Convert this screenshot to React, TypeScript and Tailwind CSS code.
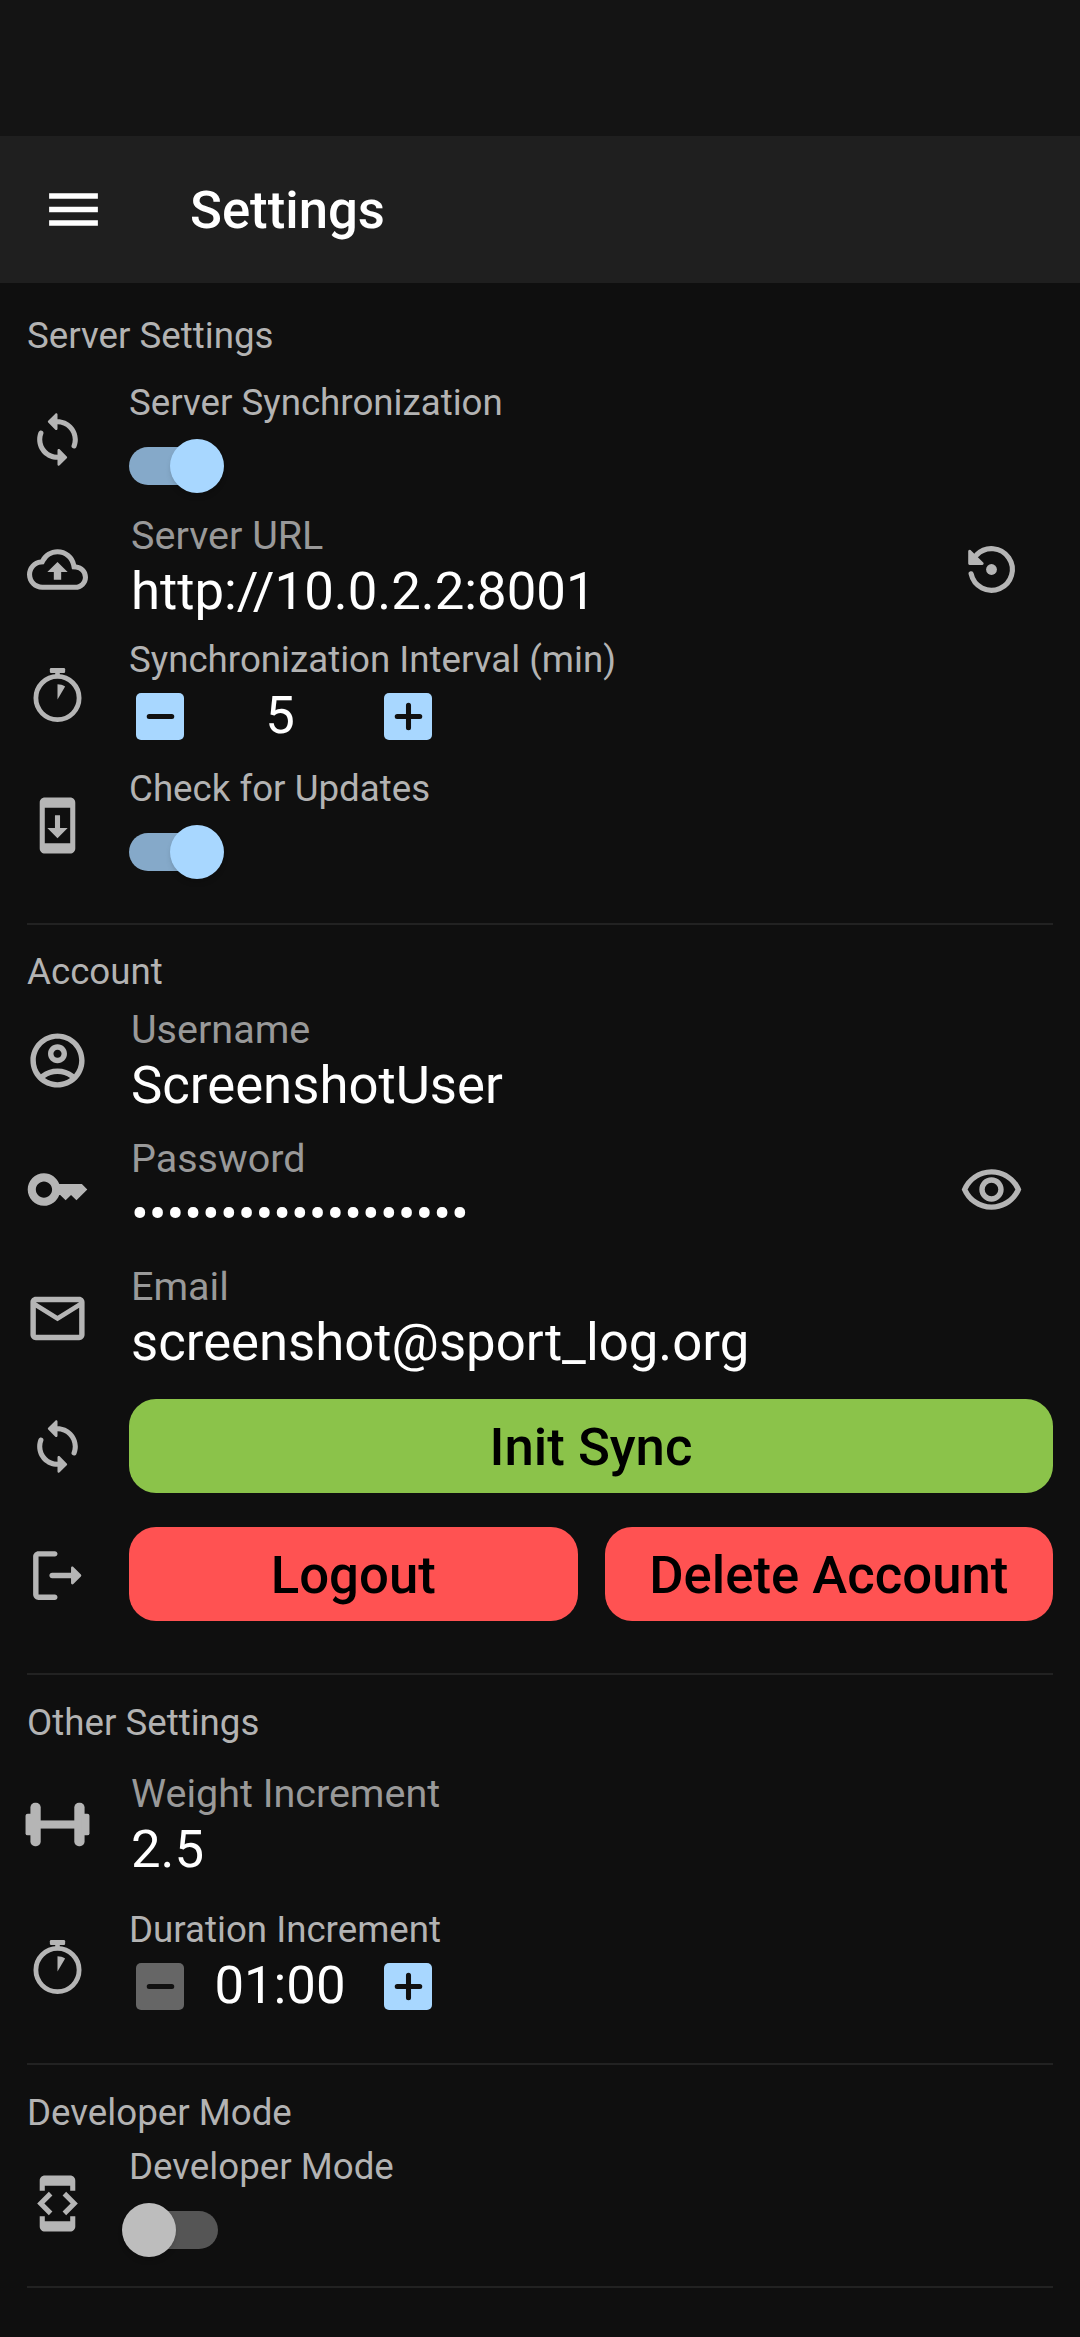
import React from 'react';
import {
  MdDeveloperMode,
  MdMenu,
  MdOutlineAccountCircle,
  MdOutlineCloudUpload,
  MdOutlineEmail,
  MdOutlineRemoveRedEye,
  MdSystemUpdate,
} from 'react-icons/md';

const SyncIcon = () => (
  <svg width="65" height="65" viewBox="0 0 24 24" fill="currentColor">
    <path d="M12 4V2.21c0-.45-.54-.67-.85-.35l-2.8 2.79c-.2.2-.2.51 0 .71l2.79 2.79c.32.31.86.09.86-.36V6c3.31 0 6 2.69 6 6 0 .79-.15 1.56-.44 2.25-.15.36-.04.77.23 1.04.51.51 1.37.33 1.64-.34.37-.91.57-1.91.57-2.95 0-4.42-3.58-8-8-8zm0 14c-3.31 0-6-2.69-6-6 0-.79.15-1.56.44-2.25.15-.36.04-.77-.23-1.04-.51-.51-1.37-.33-1.64.34C4.2 9.96 4 10.96 4 12c0 4.42 3.58 8 8 8v1.79c0 .45.54.67.85.35l2.79-2.79c.2-.2.2-.51 0-.71l-2.79-2.79c-.31-.31-.85-.09-.85.36V18z" />
  </svg>
);

const RestoreIcon = () => (
  <svg width="65" height="65" viewBox="0 0 24 24" fill="currentColor">
    <path d="M4.47 13.6A7.7 7.7 0 1 0 6.5 6.6" fill="none" stroke="currentColor" strokeWidth="1.9" strokeLinecap="round" />
    <path d="M3.9 5.2v4.6h4.7z" stroke="currentColor" strokeWidth="1" strokeLinejoin="round" />
    <circle cx="12" cy="12" r="2" />
  </svg>
);

const TimerIcon = () => (
  <svg width="65" height="65" viewBox="0 0 24 24" fill="currentColor">
    <rect x="9" y="1.6" width="6" height="1.9" rx="0.5" />
    <rect x="11.1" y="3" width="1.8" height="2.5" />
    <circle cx="12" cy="13.4" r="8.5" fill="none" stroke="currentColor" strokeWidth="1.9" />
    <path d="M12 14V8c1 0 2.1.3 3 .9z" />
  </svg>
);

const KeyIcon = () => (
  <svg width="65" height="65" viewBox="0 0 24 24" fill="currentColor">
    <path d="M21 10h-8.35C11.83 7.67 9.61 6 7 6c-3.31 0-6 2.69-6 6s2.69 6 6 6c2.61 0 4.83-1.67 5.65-4H13l2 2 2-2 2 2 4-4.04L21 10zM7 15c-1.65 0-3-1.35-3-3s1.35-3 3-3 3 1.35 3 3-1.35 3-3 3z" />
  </svg>
);

const LogoutIcon = () => (
  <svg width="65" height="65" viewBox="0 0 24 24" fill="currentColor">
    <path d="M5 5h6c.55 0 1-.45 1-1s-.45-1-1-1H5c-1.1 0-2 .9-2 2v14c0 1.1.9 2 2 2h6c.55 0 1-.45 1-1s-.45-1-1-1H5V5z" />
    <path d="M20.65 11.65l-2.79-2.79c-.32-.32-.86-.1-.86.35V11h-7c-.55 0-1 .45-1 1s.45 1 1 1h7v1.79c0 .45.54.67.85.35l2.79-2.79c.2-.19.2-.51.01-.7z" />
  </svg>
);

const DumbbellIcon = () => (
  <svg width="65" height="65" viewBox="0 0 24 24" fill="currentColor">
    <rect x="0.2" y="8" width="3" height="8" rx="0.8" />
    <rect x="2" y="4" width="3.8" height="16" rx="1.7" />
    <rect x="5" y="10.5" width="14" height="3" />
    <rect x="18.2" y="4" width="3.8" height="16" rx="1.7" />
    <rect x="20.8" y="8" width="3" height="8" rx="0.8" />
  </svg>
);

const Section: React.FC<{ title: string; children: React.ReactNode }> = ({ title, children }) => (
  <section className="border-b-2 border-[#222222]">
    <h2 className="h-[36px] text-[36.7px] leading-[36px] text-[#b3b3b3]">{title}</h2>
    {children}
  </section>
);

const Row: React.FC<{ icon: React.ReactNode; className: string; trailing?: React.ReactNode; children: React.ReactNode }> = ({ icon, className, trailing, children }) => (
  <div className={`flex items-center ${className}`}>
    <div className="flex w-[61px] flex-none justify-center text-[#b5b5b5]">{icon}</div>
    <div className="ml-[41px] min-w-0 flex-1">{children}</div>
    {trailing && <div className="mr-[29px] flex-none text-[#b5b5b5]">{trailing}</div>}
  </div>
);

const FieldLabel: React.FC<{ children: React.ReactNode }> = ({ children }) => (
  <div className="h-[35px] text-[36.7px] leading-[35px] text-[#b3b3b3]">{children}</div>
);

const Input: React.FC<{ label: string; value: string }> = ({ label, value }) => (
  <div className="pl-[2px]">
    <div className="h-[36px] text-[39.5px] leading-[36px] text-[#999999]">{label}</div>
    <div className="mt-[7px] h-[60px] text-[52.7px] leading-[60px] whitespace-nowrap text-white">{value}</div>
  </div>
);

const Toggle: React.FC<{ on?: boolean }> = ({ on = false }) => (
  <div className="mt-[19px] flex h-[54px] items-center">
    <div className={`relative h-[38px] w-[87px] rounded-full ${on ? 'bg-[#85a9c9]' : 'ml-[2px] bg-[#555555]'}`}>
      <div className={`absolute top-[-8px] h-[54px] w-[54px] rounded-full shadow-md ${on ? 'right-[-8px] bg-[#a8d7ff]' : 'left-[-9px] bg-[#bdbdbd]'}`} />
    </div>
  </div>
);

const Step: React.FC<{ kind: 'plus' | 'minus'; disabled?: boolean }> = ({ kind, disabled = false }) => (
  <div className={`flex h-[47px] w-[48px] flex-none items-center justify-center rounded-[5px] ${disabled ? 'bg-[#666666]' : 'bg-[#a8d7ff]'}`}>
    <svg width="45" height="45" viewBox="0 0 24 24" fill="#111111" stroke="#111111" strokeWidth="0.7">
      {kind === 'plus' ? (
        <path d="M18 13h-5v5c0 .55-.45 1-1 1s-1-.45-1-1v-5H6c-.55 0-1-.45-1-1s.45-1 1-1h5V6c0-.55.45-1 1-1s1 .45 1 1v5h5c.55 0 1 .45 1 1s-.45 1-1 1z" />
      ) : (
        <path d="M18 13H6c-.55 0-1-.45-1-1s.45-1 1-1h12c.55 0 1 .45 1 1s-.45 1-1 1z" />
      )}
    </svg>
  </div>
);

const Stepper: React.FC<{ value: string; minusDisabled?: boolean; className: string }> = ({ value, minusDisabled, className }) => (
  <div className={`flex w-[303px] items-center pl-[7px] ${className}`}>
    <Step kind="minus" disabled={minusDisabled} />
    <div className="h-[47px] flex-1 pr-[8px] text-center text-[52.7px] leading-[44px] text-white">{value}</div>
    <Step kind="plus" />
  </div>
);

const ActionButton: React.FC<{ label: string; color: string }> = ({ label, color }) => (
  <div className={`flex h-[94px] flex-1 items-center justify-center rounded-[27px] pt-[4px] text-[52.7px] font-medium text-black ${color}`}>{label}</div>
);

const App: React.FC = () => (
  <div className="h-[2337px] overflow-hidden bg-[#0f0f0f] font-['Roboto',sans-serif]">
    <div className="h-[136px] bg-[#141414]" />
    <header className="flex h-[147px] items-center bg-[#1f1f1f] pl-[41px] text-white">
      <MdMenu size={65} />
      <h1 className="ml-[84px] pt-[3px] text-[52.7px] font-medium">Settings</h1>
    </header>
    <main className="px-[27px]">
      <div className="pt-[35px]">
        <Section title="Server Settings">
          <Row icon={<SyncIcon />} className="mt-[31px] h-[108px]">
            <FieldLabel>Server Synchronization</FieldLabel>
            <Toggle on />
          </Row>
          <Row icon={<MdOutlineCloudUpload size={65} />} trailing={<RestoreIcon />} className="mt-[24px] h-[104px]">
            <Input label="Server URL" value="http://10.0.2.2:8001" />
          </Row>
          <Row icon={<TimerIcon />} className="mt-[20px] h-[107px]">
            <FieldLabel>Synchronization Interval (min)</FieldLabel>
            <Stepper value="5" className="mt-[16px] mb-[8px]" />
          </Row>
          <Row icon={<MdSystemUpdate size={65} />} className="mt-[22px] h-[110px]">
            <FieldLabel>Check for Updates</FieldLabel>
            <Toggle on />
          </Row>
          <div className="h-[43px]" />
        </Section>
      </div>
      <div className="pt-[29px]">
        <Section title="Account">
          <Row icon={<div className="pb-[5px]"><MdOutlineAccountCircle size={65} /></div>} className="mt-[21px] h-[104px]">
            <Input label="Username" value="ScreenshotUser" />
          </Row>
          <Row
            icon={<div className="pb-[5px]"><KeyIcon /></div>}
            trailing={<div className="pb-[5px]"><MdOutlineRemoveRedEye size={65} /></div>}
            className="mt-[25px] h-[104px]"
          >
            <Input label="Password" value={'•'.repeat(19)} />
          </Row>
          <Row icon={<div className="pb-[3px]"><MdOutlineEmail size={65} /></div>} className="mt-[24px] h-[104px]">
            <Input label="Email" value="screenshot@sport_log.org" />
          </Row>
          <Row icon={<SyncIcon />} className="mt-[27px] h-[94px]">
            <div className="flex">
              <ActionButton label="Init Sync" color="bg-[#8bc34a]" />
            </div>
          </Row>
          <Row icon={<div className="pt-[3px]"><LogoutIcon /></div>} className="mt-[34px] h-[94px]">
            <div className="flex gap-[27px]">
              <ActionButton label="Logout" color="bg-[#ff5252]" />
              <ActionButton label="Delete Account" color="bg-[#ff5252]" />
            </div>
          </Row>
          <div className="h-[52px]" />
        </Section>
      </div>
      <div className="pt-[30px]">
        <Section title="Other Settings">
          <Row icon={<div className="pb-[5px]"><DumbbellIcon /></div>} className="mt-[34px] h-[104px]">
            <Input label="Weight Increment" value="2.5" />
          </Row>
          <Row icon={<TimerIcon />} className="mt-[33px] h-[108px]">
            <FieldLabel>Duration Increment</FieldLabel>
            <Stepper value="01:00" minusDisabled className="mt-[16px] mb-[10px]" />
          </Row>
          <div className="h-[43px]" />
        </Section>
      </div>
      <div className="pt-[30px]">
        <Section title="Developer Mode">
          <Row icon={<MdDeveloperMode size={65} />} className="mt-[18px] h-[108px]">
            <FieldLabel>Developer Mode</FieldLabel>
            <Toggle />
          </Row>
          <div className="h-[29px]" />
        </Section>
      </div>
    </main>
  </div>
);

export default App;
